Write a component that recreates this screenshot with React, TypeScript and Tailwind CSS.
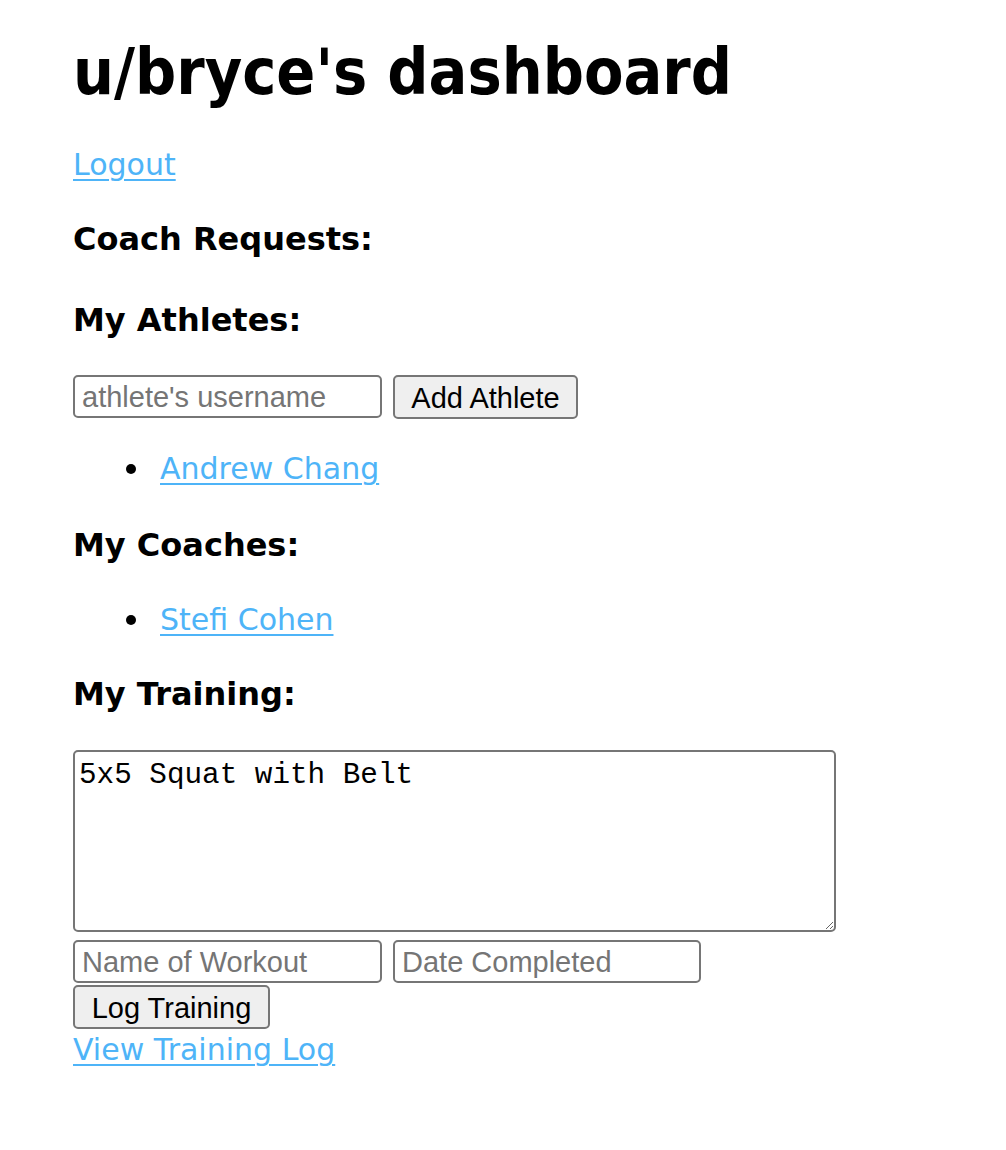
const linkCls =
  "font-['DejaVu_Sans',sans-serif] text-[30px] leading-[36px] text-[#4eb4f8] underline decoration-2 underline-offset-[4px]";
const headCls = "font-['DejaVu_Sans',sans-serif] text-[32px] leading-[38px] font-bold text-black";
const inputCls =
  "h-[43px] rounded-[5px] border-2 border-[#767676] bg-white px-[7px] pt-[2px] font-['Liberation_Sans',Arial,sans-serif] text-[29px] text-black placeholder:text-[#757575] outline-none";
const buttonCls =
  "h-[44px] rounded-[5px] border-2 border-[#767676] bg-[#efefef] font-['Liberation_Sans',Arial,sans-serif] text-[29px] text-black";

function Bullet({ name }: { name: string }) {
  return (
    <li className="flex items-center">
      <span className="ml-[53px] mr-[24px] h-[10px] w-[10px] rounded-full bg-black" />
      <a href="#" className={linkCls}>
        {name}
      </a>
    </li>
  );
}

export default function App() {
  return (
    <div className="min-h-[1150px] bg-white pl-[73px] text-black">
      <div className="flex flex-col items-start">
        <h1 className="mt-[35px] font-['DejaVu_Sans_Condensed','DejaVu_Sans',sans-serif] text-[64px] leading-[74px] font-bold">
          u/bryce's dashboard
        </h1>

        <a href="#" className={`mt-[38px] ${linkCls}`}>
          Logout
        </a>

        <h4 className={`mt-[37px] ${headCls}`}>Coach Requests:</h4>

        <h4 className={`mt-[43px] ${headCls}`}>My Athletes:</h4>

        <div className="mt-[36px] flex gap-[11px]">
          <input type="text" placeholder="athlete's username" className={`w-[309px] ${inputCls}`} />
          <button className={`w-[185px] ${buttonCls}`}>Add Athlete</button>
        </div>

        <ul className="mt-[32px]">
          <Bullet name="Andrew Chang" />
        </ul>

        <h4 className={`mt-[39px] ${headCls}`}>My Coaches:</h4>

        <ul className="mt-[38px]">
          <Bullet name="Stefi Cohen" />
        </ul>

        <h4 className={`mt-[37px] ${headCls}`}>My Training:</h4>

        <textarea
          defaultValue="5x5 Squat with Belt"
          className="mt-[37px] h-[182px] w-[763px] rounded-[5px] border-2 border-[#767676] bg-white px-[4px] pt-[7px] font-['Liberation_Mono','Courier_New',monospace] text-[29.3px] leading-[34px] text-black outline-none"
        />

        <div className="mt-[8px] flex gap-[11px]">
          <input type="text" placeholder="Name of Workout" className={`w-[309px] ${inputCls}`} />
          <input type="text" placeholder="Date Completed" className={`w-[308px] ${inputCls}`} />
        </div>

        <button className={`mt-[2px] w-[197px] ${buttonCls}`}>Log Training</button>

        <a href="#" className={`mt-[3px] ${linkCls}`}>
          View Training Log
        </a>
      </div>
    </div>
  );
}
